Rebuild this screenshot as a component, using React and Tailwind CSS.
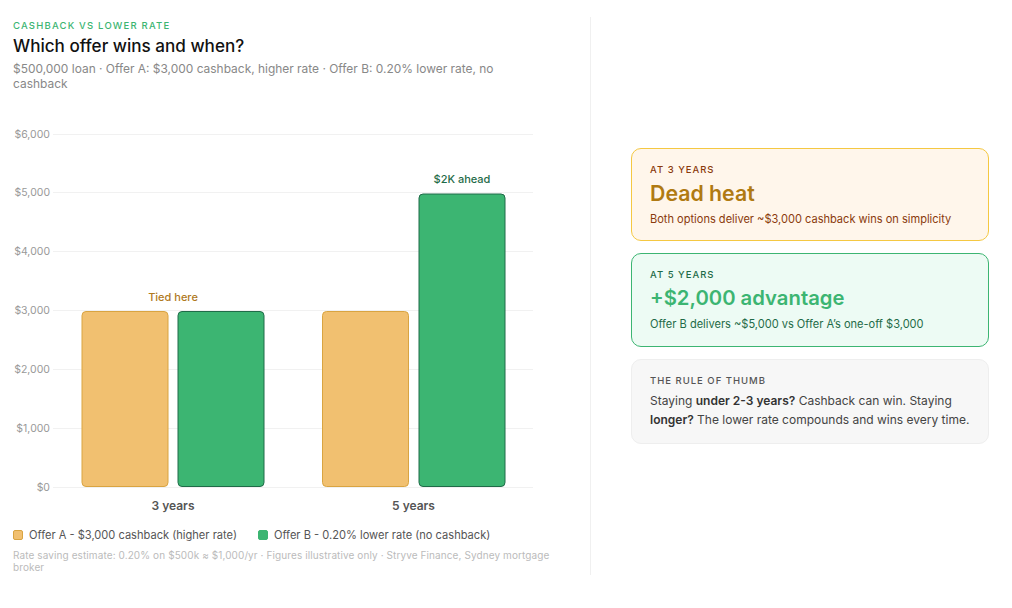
const ticks = [
  { label: "$6,000", y: 134 },
  { label: "$5,000", y: 192 },
  { label: "$4,000", y: 251 },
  { label: "$3,000", y: 310 },
  { label: "$2,000", y: 369 },
  { label: "$1,000", y: 428 },
  { label: "$0", y: 487 },
];

const bars = [
  { x: 82, y: 311, fill: "#f1c070", stroke: "#d9a441" },
  { x: 178, y: 311, fill: "#3cb572", stroke: "#1f6b48" },
  { x: 322.5, y: 311, fill: "#f1c070", stroke: "#d9a441" },
  { x: 419, y: 193.5, fill: "#3cb572", stroke: "#1f6b48" },
];

const Chart = () => {
  return (
    <svg width="560" height="400" viewBox="0 120 560 400" className="block mt-[29px] -ml-[13px]">
      {ticks.map((t) => (
        <g key={t.label}>
          <line x1="53" x2="533" y1={t.y + 0.5} y2={t.y + 0.5} stroke="#f1f1f1" />
          <text x="50" y={t.y + 3.5} textAnchor="end" fontSize="10.5" fill="#999999">
            {t.label}
          </text>
        </g>
      ))}
      {bars.map((b) => (
        <rect
          key={b.x}
          x={b.x}
          y={b.y + 0.5}
          width="86"
          height={486 - b.y}
          rx="4"
          fill={b.fill}
          stroke={b.stroke}
        />
      ))}
      <text x="173" y="301" textAnchor="middle" fontSize="11" fontWeight="500" fill="#b07a1e">
        Tied here
      </text>
      <text x="462" y="183" textAnchor="middle" fontSize="11" fontWeight="500" fill="#1f6b48">
        $2K ahead
      </text>
      <text x="173" y="510" textAnchor="middle" fontSize="12" fontWeight="600" fill="#555555">
        3 years
      </text>
      <text x="413.5" y="510" textAnchor="middle" fontSize="12" fontWeight="600" fill="#555555">
        5 years
      </text>
    </svg>
  );
};

const LegendItem = ({ swatch, label }) => {
  return (
    <div className="flex items-center gap-[6px]">
      <span className={`w-[10px] h-[10px] rounded-[2px] border ${swatch}`} />
      <span>{label}</span>
    </div>
  );
};

export default function App() {
  return (
    <div className="w-[1012px] h-[608px] bg-white pt-[17px] flex font-['Inter','Liberation_Sans',sans-serif]">
      {/* Left column */}
      <div className="w-[591px] h-[558px] border-r border-[#f0f0f0] pl-[13px] pr-[40px]">
        <div className="text-[9.5px] leading-[16px] mt-[1px] tracking-[1.2px] font-medium text-[#3cb572]">
          CASHBACK VS LOWER RATE
        </div>
        <h1 className="text-[17.1px] leading-[24px] font-medium text-[#111111]">
          Which offer wins and when?
        </h1>
        <p className="text-[11.95px] leading-[15px] mt-[3px] text-[#888888]">
          $500,000 loan · Offer A: $3,000 cashback, higher rate · Offer B: 0.20% lower rate, no cashback
        </p>
        <Chart />
        <div className="flex gap-[21px] mt-[7px] text-[11.1px] leading-[16px] text-[#555555]">
          <LegendItem swatch="bg-[#f1c070] border-[#d9a441]" label="Offer A - $3,000 cashback (higher rate)" />
          <LegendItem swatch="bg-[#3cb572] border-[#3cb572]" label="Offer B - 0.20% lower rate (no cashback)" />
        </div>
        <p className="text-[10px] leading-[12px] mt-[6px] tracking-[0.1px] text-[#bbbbbb]">
          Rate saving estimate: 0.20% on $500k ≈ $1,000/yr · Figures illustrative only · Stryve Finance, Sydney mortgage broker
        </p>
      </div>

      {/* Right column */}
      <div className="w-[398px] h-[558px] pl-[40px] flex flex-col justify-center gap-[12px]">
        <div className="h-[93px] rounded-[10px] border border-[#f5c842] bg-[#fff6eb] px-[18px] pt-[14px]">
          <div className="text-[9.5px] leading-[14px] tracking-[1px] font-medium text-[#8a3a0c]">AT 3 YEARS</div>
          <div className="text-[21.3px] leading-[28px] mt-[2px] font-semibold text-[#b07a12]">Dead heat</div>
          <div className="text-[11.05px] leading-[16px] mt-[4px] text-[#8a3a0c]">
            Both options deliver ~$3,000 cashback wins on simplicity
          </div>
        </div>
        <div className="h-[94px] rounded-[10px] border border-[#3cb572] bg-[#edfbf4] px-[18px] pt-[14px]">
          <div className="text-[9.5px] leading-[14px] tracking-[1px] font-medium text-[#1f6b48]">AT 5 YEARS</div>
          <div className="text-[20.3px] leading-[28px] mt-[2px] font-semibold text-[#3cb572]">+$2,000 advantage</div>
          <div className="text-[11.05px] leading-[16px] mt-[4px] text-[#1f6b48]">
            Offer B delivers ~$5,000 vs Offer A’s one-off $3,000
          </div>
        </div>
        <div className="h-[85px] rounded-[10px] border border-[#eeeeee] bg-[#f7f7f7] px-[18px] pt-[14px]">
          <div className="text-[9.5px] leading-[14px] tracking-[1px] font-medium text-[#555555]">THE RULE OF THUMB</div>
          <p className="text-[12px] leading-[19px] mt-[3px] text-[#444444]">
            Staying <strong className="font-semibold text-[#333333]">under 2-3 years?</strong> Cashback can win. Staying{" "}
            <strong className="font-semibold text-[#333333]">longer?</strong> The lower rate compounds and wins every time.
          </p>
        </div>
      </div>
    </div>
  );
}
